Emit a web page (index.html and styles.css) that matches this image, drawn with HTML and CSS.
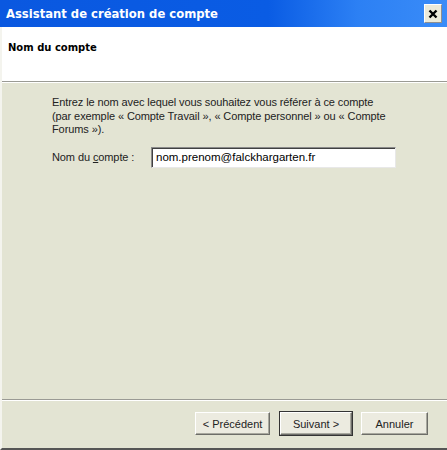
FILE: index.html
```html
<!DOCTYPE html>
<html lang="fr">
<head>
<meta charset="utf-8">
<link rel="stylesheet" href="styles.css">
</head>
<body>
<div class="window">
  <div class="titlebar">
    <span class="title">Assistant de création de compte</span>
    <span class="close"><svg width="10" height="10" viewBox="0 0 10 10"><path d="M1.5 1.5 L8.5 8.5 M8.5 1.5 L1.5 8.5" stroke="#000" stroke-width="2.4"/></svg></span>
  </div>
  <div class="header">
    <div class="header-title">Nom du compte</div>
  </div>
  <div class="content">
    <p class="intro">Entrez le nom avec lequel vous souhaitez vous référer à ce compte<br>(par exemple « Compte Travail », « Compte personnel » ou « Compte<br>Forums »).</p>
    <div class="field">
      <label class="label">Nom du <u>c</u>ompte :</label>
      <div class="input">nom.prenom@falckhargarten.fr</div>
    </div>
  </div>
  <div class="footer">
    <div class="btn prev">&lt; Précédent</div>
    <div class="btn next">Suivant &gt;</div>
    <div class="btn cancel">Annuler</div>
  </div>
</div>
</body>
</html>
```
FILE: styles.css
```css
html, body {
  margin: 0;
  padding: 0;
  width: 447px;
  height: 450px;
  overflow: hidden;
  background: #e3e4d3;
}
.window {
  width: 447px;
  height: 450px;
  display: flex;
  flex-direction: column;
  box-sizing: border-box;
  border-left: 2px solid #f4f4ee;
  border-bottom: 2px solid #555;
  font-family: "Liberation Sans", sans-serif;
  font-size: 11px;
  color: #000;
}
.titlebar {
  height: 27px;
  flex: none;
  margin-left: -2px;
  background: linear-gradient(90deg, #0a58e0 0%, #0a5ce4 60%, #2c80f4 80%, #3a8cf8 100%);
  display: flex;
  align-items: center;
  padding: 0 5px 0 6px;
  box-sizing: border-box;
}
.title {
  flex: 1;
  color: #fff;
  font-family: "DejaVu Sans", sans-serif;
  font-weight: bold;
  font-size: 11.6px;
  padding-top: 1px;
}
.close {
  width: 18px;
  height: 19px;
  background: #ecead9;
  border: 1px solid #fff;
  border-right-color: #8f8f8f;
  border-bottom-color: #8f8f8f;
  box-sizing: border-box;
  display: flex;
  align-items: center;
  justify-content: center;
}
.header {
  height: 55px;
  flex: none;
  background: #fff;
  border-bottom: 1px solid #9a9a94;
  box-shadow: 0 1px 0 #fff;
  box-sizing: border-box;
  padding: 15px 0 0 6px;
}
.header-title {
  font-family: "DejaVu Sans", sans-serif;
  font-weight: bold;
  font-size: 10px;
}
.content {
  flex: 1;
  padding: 13px 30px 0 50px;
  margin-top: 1px;
}
.intro {
  margin: 0;
  font-size: 11px;
  letter-spacing: -0.1px;
  line-height: 13.5px;
  color: #222;
  white-space: nowrap;
}
.field {
  display: flex;
  align-items: center;
  margin-top: 10px;
}
.label {
  width: 99px;
  font-size: 11px;
  letter-spacing: -0.1px;
  color: #222;
}
.input {
  width: 245px;
  height: 21px;
  background: #fff;
  border: 1px solid;
  border-color: #8a8a8a #e8e8e8 #e8e8e8 #8a8a8a;
  box-shadow: inset 1px 1px 0 #404040;
  box-sizing: border-box;
  padding: 3px 0 0 4px;
  font-size: 11.5px;
}
.footer {
  height: 49px;
  flex: none;
  border-top: 1px solid #9a9a94;
  box-shadow: inset 0 1px 0 #fff;
  box-sizing: border-box;
  display: flex;
  justify-content: flex-end;
  align-items: flex-start;
  padding: 12px 19px 0 0;
  gap: 9px;
}
.btn {
  height: 23px;
  box-sizing: border-box;
  background: #ecebe0;
  border: 1px solid #fff;
  border-right-color: #6d6d68;
  border-bottom-color: #6d6d68;
  box-shadow: inset -1px -1px 0 #a8a89e;
  display: flex;
  align-items: center;
  justify-content: center;
  font-size: 11px;
  color: #222;
}
.prev { width: 75px; }
.next { width: 72px; outline: 1px solid #333; margin-left: 1px; }
.cancel { width: 67px; }
```
